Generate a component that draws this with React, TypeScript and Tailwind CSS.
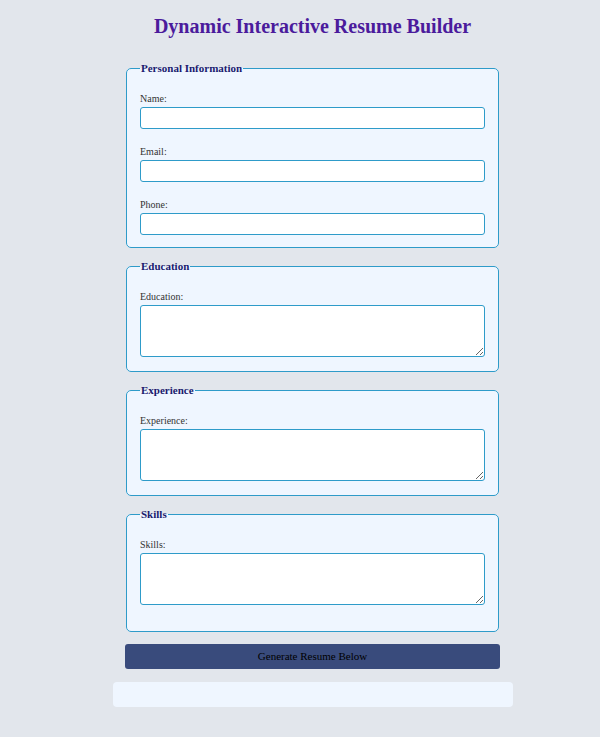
export default function App() {
  const serif = { fontFamily: "'Liberation Serif', 'Times New Roman', serif" };
  const inputCls =
    "block w-full h-[22px] border border-[#2e9bc9] rounded-[3px] bg-white px-1 text-[11px] outline-none";
  const areaCls =
    "block w-full h-[52px] border border-[#2e9bc9] rounded-[3px] bg-white px-1 text-[11px] outline-none";
  const fieldsetCls =
    "mx-[1px] border border-[#2e9bc9] rounded-[5px] bg-[#eff6ff] px-[13px] pt-[18px]";
  const legendCls = "text-[11px] font-bold text-[#1a1a6e] leading-[13px] px-[1px]";
  const labelCls = "block text-[10px] text-[#333] leading-[12px] mb-[2px]";

  return (
    <div className="min-h-[737px] bg-[#e2e6ec] pl-[25px] pt-[14px]" style={serif}>
      <h1 className="text-center text-[20px] font-bold text-[#4b1b9c] leading-[24px]">
        Dynamic Interactive Resume Builder
      </h1>

      <div className="w-[375px] mx-auto mt-[24px] flex flex-col">
        {/* Personal Information */}
        <fieldset className={`${fieldsetCls} pb-[12px]`}>
          <legend className={legendCls}>Personal Information</legend>
          <div className="flex flex-col gap-[17px]">
            <div>
              <label className={labelCls}>Name:</label>
              <input className={inputCls} />
            </div>
            <div>
              <label className={labelCls}>Email:</label>
              <input className={inputCls} />
            </div>
            <div>
              <label className={labelCls}>Phone:</label>
              <input className={inputCls} />
            </div>
          </div>
        </fieldset>

        {/* Education */}
        <fieldset className={`${fieldsetCls} pb-[14px] mt-[12px]`}>
          <legend className={legendCls}>Education</legend>
          <label className={labelCls}>Education:</label>
          <textarea className={areaCls} />
        </fieldset>

        {/* Experience */}
        <fieldset className={`${fieldsetCls} pb-[14px] mt-[12px]`}>
          <legend className={legendCls}>Experience</legend>
          <label className={labelCls}>Experience:</label>
          <textarea className={areaCls} />
        </fieldset>

        {/* Skills */}
        <fieldset className={`${fieldsetCls} pb-[26px] mt-[12px]`}>
          <legend className={legendCls}>Skills</legend>
          <label className={labelCls}>Skills:</label>
          <textarea className={areaCls} />
        </fieldset>

        <button className="mt-[12px] h-[25px] w-full rounded-[3px] bg-[#394b7c] text-[11px] text-black">
          Generate Resume Below
        </button>
      </div>

      <div className="w-[400px] h-[25px] mx-auto mt-[13px] rounded-[4px] bg-[#eff6ff]" />
    </div>
  );
}
